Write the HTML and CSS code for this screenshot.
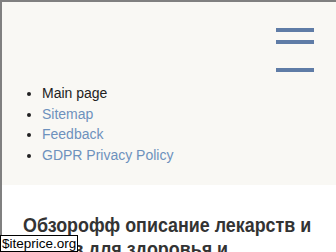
FILE: index.html
```html
<!DOCTYPE html>
<html lang="ru">

<head>
    <meta charset="UTF-8">
    <meta name="viewport" content="width=device-width, initial-scale=1.0">
    <title>Обзорофф</title>
    <link rel="stylesheet" href="styles.css">
</head>

<body>
    <header class="header">
        <div class="header-top">
            <button class="burger" aria-label="Menu">
                <span class="bar"></span>
                <span class="bar"></span>
                <span class="bar bar-last"></span>
            </button>
        </div>
        <ul class="menu">
            <li class="current">Main page</li>
            <li><a href="#sitemap">Sitemap</a></li>
            <li><a href="#feedback">Feedback</a></li>
            <li><a href="#gdpr">GDPR Privacy Policy</a></li>
        </ul>
    </header>

    <main class="content">
        <h1 class="title">Обзорофф описание лекарств и БАДов для здоровья и <span class="title-tail">красоты</span></h1>
    </main>

    <div class="stamp">$iteprice.org</div>
</body>

</html>
```
FILE: styles.css
```css
html,
body {
    height: 100%;
}

body {
    margin: 0;
    overflow: hidden;
    border-top: 2px solid #808080;
    border-left: 2px solid #808080;
    background-color: #fff;
    font-family: "Liberation Sans", Arial, sans-serif;
    color: #222;
}

.header {
    padding: 0 0 19px;
    background-color: #f9f8f4;
}

.header-top {
    display: flex;
    justify-content: flex-end;
    padding: 26px 22px 0 0;
}

.burger {
    display: flex;
    flex-direction: column;
    width: 38px;
    padding: 0;
    border: none;
    background: none;
    cursor: pointer;
}

.burger .bar {
    display: block;
    width: 38px;
    height: 4px;
    margin-bottom: 8px;
    background-color: #5f7ca6;
}

.burger .bar-last {
    margin: 16px 0 0;
}

.menu {
    margin: 11px 0 0;
    padding-left: 40px;
    font-size: 14px;
    line-height: 20.7px;
}

.menu a {
    color: #6d91bd;
    text-decoration: none;
}

.content {
    padding: 28px 0 0 21px;
}

/* narrow bold heading: wide face squeezed to the reference width */
.title {
    width: 324px;
    margin: 0;
    font-size: 20px;
    line-height: 24px;
    font-weight: bold;
    color: #333;
    transform: scaleX(.894);
    transform-origin: left top;
}

.title-tail {
    display: block;
}

.stamp {
    position: absolute;
    left: 0;
    bottom: 0;
    padding: 0 1px;
    border: 1px solid #000;
    background-color: #fff;
    font-size: 13.5px;
    line-height: 15px;
    color: #000;
}
```
